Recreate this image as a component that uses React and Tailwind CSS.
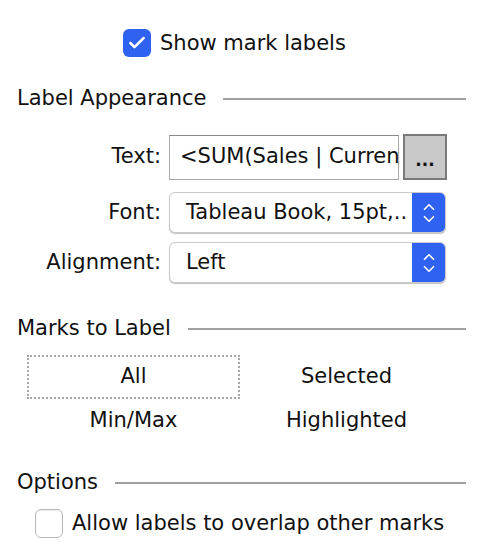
import { Check, ChevronUp, ChevronDown } from 'lucide-react';

const font = { fontFamily: '"DejaVu Sans", "Liberation Sans", sans-serif' };

const SectionHeader = ({ title }) => (
  <div className="flex items-center gap-[17px] pl-[17px] pr-[13px]">
    <span className="text-[21px] text-[#111] leading-none">{title}</span>
    <div className="flex-1 h-[2px] bg-[#a0a0a0]" />
  </div>
);

const SelectBox = ({ value }) => (
  <div className="flex w-[277px] h-[41px] rounded-[6px] border border-[#c9c9c9] shadow-[0_1px_1px_rgba(0,0,0,0.25)] overflow-hidden bg-white">
    <div className="flex-1 flex items-center pl-[16px] text-[21px] text-[#111] whitespace-nowrap overflow-hidden">
      {value}
    </div>
    <div className="w-[33px] bg-[#2f62f0] flex flex-col items-center justify-center -space-y-[6px]">
      <ChevronUp className="w-[20px] h-[18px] text-white" strokeWidth={2.2} />
      <ChevronDown className="w-[20px] h-[18px] text-white" strokeWidth={2.2} />
    </div>
  </div>
);

const App = () => {
  return (
    <div className="w-[479px] h-[547px] bg-white text-[#111] overflow-hidden" style={font}>
      {/* Show mark labels */}
      <div className="flex items-center gap-[9px] pl-[123px] pt-[29px]">
        <div className="w-[28px] h-[28px] rounded-[6px] bg-[#2f62f0] flex items-center justify-center">
          <Check className="w-[20px] h-[20px] text-white" strokeWidth={3} />
        </div>
        <span className="text-[21px] leading-none">Show mark labels</span>
      </div>

      {/* Label Appearance */}
      <div className="mt-[31px]">
        <SectionHeader title="Label Appearance" />
      </div>

      <div className="grid grid-cols-[161px_1fr] gap-x-[8px] mt-[25px] items-center">
        <span className="text-right text-[21px]">Text:</span>
        <div className="flex items-center gap-[4px]">
          <div className="w-[230px] h-[45px] border border-[#aaa] border-t-[#888] flex items-center pl-[10px] text-[21px] whitespace-nowrap overflow-hidden">
            &lt;SUM(Sales | Currency)&gt;
          </div>
          <div className="w-[44px] h-[46px] border-2 border-[#7a7a7a] bg-[#c8c8c8] flex items-center justify-center text-[17px] font-bold leading-none pt-[6px]">
            ...
          </div>
        </div>

        <span className="text-right text-[21px] mt-[12px]">Font:</span>
        <div className="mt-[12px]">
          <SelectBox value="Tableau Book, 15pt,.." />
        </div>

        <span className="text-right text-[21px] mt-[9px]">Alignment:</span>
        <div className="mt-[9px]">
          <SelectBox value="Left" />
        </div>
      </div>

      {/* Marks to Label */}
      <div className="mt-[35px]">
        <SectionHeader title="Marks to Label" />
      </div>

      <div className="grid grid-cols-[213px_213px] pl-[27px] mt-[16px] text-[21px]">
        <div className="h-[44px] border-2 border-dotted border-[#a8a8a8] flex items-center justify-center">All</div>
        <div className="h-[44px] flex items-center justify-center">Selected</div>
        <div className="h-[44px] flex items-center justify-center">Min/Max</div>
        <div className="h-[44px] flex items-center justify-center">Highlighted</div>
      </div>

      {/* Options */}
      <div className="mt-[29px]">
        <SectionHeader title="Options" />
      </div>

      <div className="flex items-center gap-[9px] pl-[35px] mt-[16px]">
        <div className="w-[28px] h-[29px] rounded-[6px] border border-[#b8b8b8] bg-white shadow-[inset_0_1px_1px_rgba(0,0,0,0.08)]" />
        <span className="text-[21px] leading-none">Allow labels to overlap other marks</span>
      </div>
    </div>
  );
};

export default App;
